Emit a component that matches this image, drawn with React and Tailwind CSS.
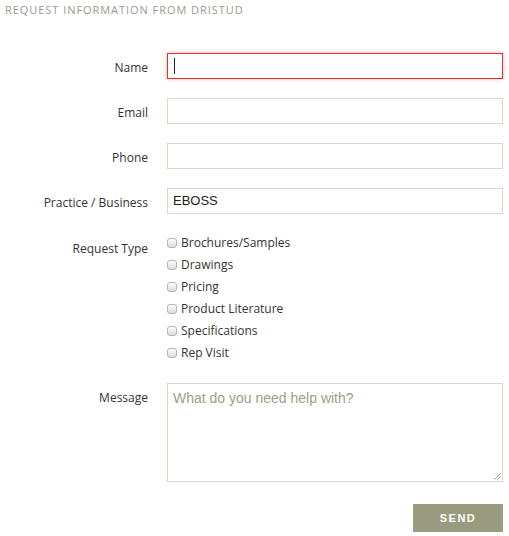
import React from 'react'

const fields = [
    { label: 'Name', value: '', focus: true },
    { label: 'Email', value: '' },
    { label: 'Phone', value: '' },
    { label: 'Practice / Business', value: 'EBOSS' },
]

const requestTypes = [
    'Brochures/Samples',
    'Drawings',
    'Pricing',
    'Product Literature',
    'Specifications',
    'Rep Visit',
]

const FakeCheckbox = () => (
    <span className="mt-[5px] inline-block w-[10px] h-[10px] shrink-0 rounded-[3px] border border-[#b4b4b4] bg-gradient-to-b from-[#fdfdfd] to-[#dcdcdc] shadow-[inset_0_1px_0_#fff]" />
)

const App = () => {
    return (
        <div className="w-[509px] h-[536px] bg-white font-['Open_Sans',sans-serif] text-[#333333]">
            <div className="pl-[5px] pt-[2px] text-[11px] leading-[16px] tracking-[0.95px] text-[#9a9a8c] uppercase">
                Request Information from Dristud
            </div>

            <div className="mt-[35px] flex flex-col gap-[19px] pr-[6px]">
                {fields.map((f) => (
                    <div key={f.label} className="flex items-start">
                        <label className="w-[148px] shrink-0 pt-[5px] text-right text-[12px] leading-[20px]">
                            {f.label}
                        </label>
                        <div
                            className={`ml-[19px] flex-1 h-[26px] flex items-center px-[5px] font-['Liberation_Sans',Arial,sans-serif] text-[13px] text-[#222] ${
                                f.focus
                                    ? 'border border-[#e2302a] shadow-[0_0_4px_rgba(226,48,42,0.35)]'
                                    : 'border border-[#d9d7c8]'
                            }`}
                        >
                            {f.focus ? (
                                <span className="ml-[1px] inline-block w-[1px] h-[16px] bg-[#222]" />
                            ) : (
                                f.value
                            )}
                        </div>
                    </div>
                ))}

                <div className="flex items-start">
                    <label className="w-[148px] shrink-0 pt-[6px] text-right text-[12px] leading-[20px]">
                        Request Type
                    </label>
                    <div className="ml-[19px] mb-[1px] flex flex-col gap-[2px]">
                        {requestTypes.map((t) => (
                            <div key={t} className="flex items-start gap-[4px] text-[12px] leading-[20px]">
                                <FakeCheckbox />
                                <span>{t}</span>
                            </div>
                        ))}
                    </div>
                </div>

                <div className="flex items-start">
                    <label className="w-[148px] shrink-0 pt-[5px] text-right text-[12px] leading-[20px]">
                        Message
                    </label>
                    <div className="relative ml-[19px] flex-1 h-[99px] border border-[#d9d7c8] px-[5px] pt-[6px] font-['Liberation_Sans',Arial,sans-serif] text-[14px] leading-[17px] text-[#a19c86]">
                        What do you need help with?
                        <svg
                            className="absolute right-[1px] bottom-[1px]"
                            width="7"
                            height="7"
                            viewBox="0 0 7 7"
                        >
                            <path d="M6.5 0.5 L0.5 6.5 M6.5 3.5 L3.5 6.5" stroke="#999" strokeWidth="1" />
                        </svg>
                    </div>
                </div>
            </div>

            <div className="mt-[22px] flex justify-end pr-[6px]">
                <button className="w-[90px] h-[28px] bg-[#9a9a7e] text-white font-['Liberation_Sans',Arial,sans-serif] font-bold text-[11px] tracking-[1.5px]">
                    SEND
                </button>
            </div>
        </div>
    )
}

export default App
